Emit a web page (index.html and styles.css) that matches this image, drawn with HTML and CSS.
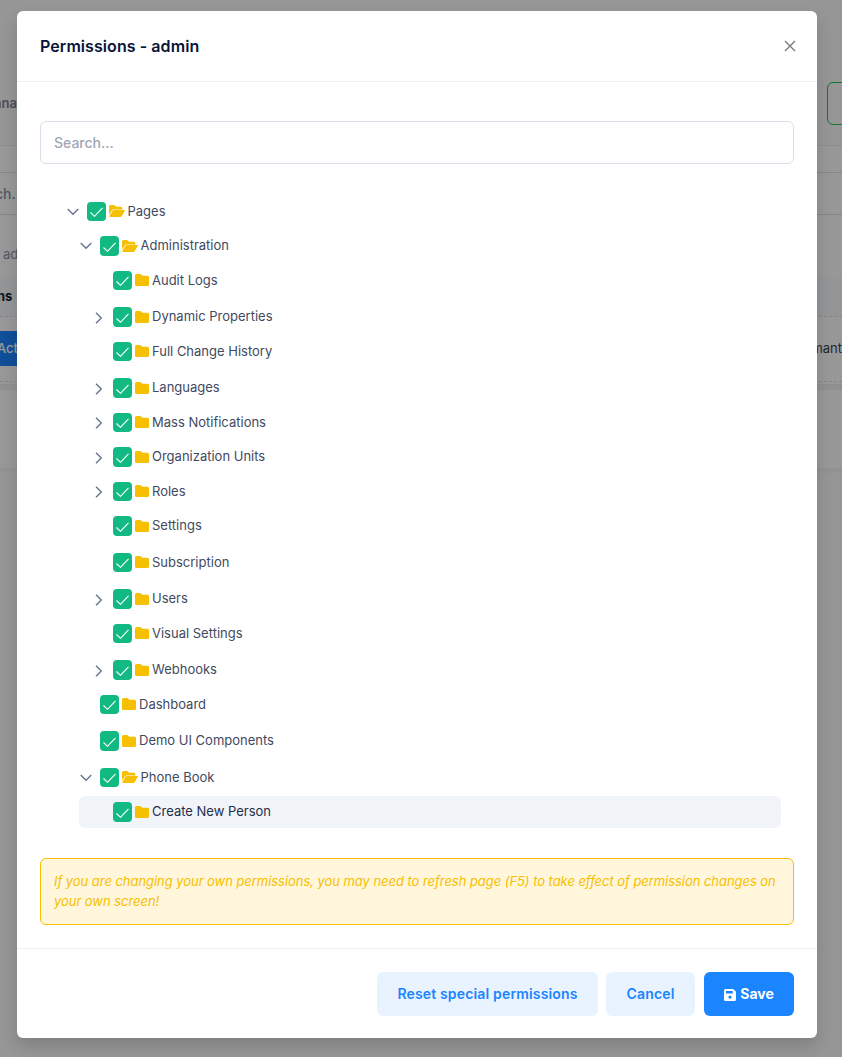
FILE: index.html
```html
<!DOCTYPE html>
<html lang="en">
<head>
<meta charset="utf-8">
<title>Permissions - admin</title>
<link rel="stylesheet" href="styles.css">
</head>
<body>
<svg class="defs" aria-hidden="true">
  <symbol id="down" viewBox="0 0 12 8"><path d="M.7 1l5.3 5.3L11.3 1" fill="none" stroke="currentColor" stroke-width="1.4"/></symbol>
  <symbol id="right" viewBox="0 0 8 12"><path d="M1 .7l5.3 5.3L1 11.3" fill="none" stroke="currentColor" stroke-width="1.4"/></symbol>
  <symbol id="check" viewBox="0 0 13 10"><path d="M.5 5.500l4 3.800L12.500.8" fill="none" stroke="currentColor" stroke-width="1.1"/></symbol>
  <symbol id="folder" viewBox="0 0 14 12"><path d="M1.500 0h3.600q.6 0 1 .4L7.400 1.700h5.100q1.500 0 1.500 1.500v7.300q0 1.500-1.500 1.500h-11Q0 12 0 10.500v-9Q0 0 1.500 0z" fill="currentColor"/></symbol>
  <symbol id="open" viewBox="0 0 16 12"><path d="M0 9.700V1.500Q0 0 1.500 0h3.300q.6 0 1 .4l1.500 1.400h4.600q1.500 0 1.500 1.500v1.100H4.600Q3.500 4.400 2.900 5.200z" fill="currentColor"/><path d="M4.700 4.900h10.500q1.100 0 .6.900l-3 5.300q-.5.900-1.500.9H.9q-1 0-.5-.9l3-5.300Q3.900 4.900 4.700 4.900z" fill="currentColor"/></symbol>
</svg>
<div class="page">
  <header class="toolbar"><span class="subtitle">ana</span><span class="outline-btn"></span></header>
  <section class="card">
    <div class="filter">ch...</div>
    <div class="note">ad</div>
    <div class="thead"><span>ns</span></div>
    <div class="trow"><span class="action">Act</span><span class="tenant">mant</span></div>
    <div class="scroller"></div>
  </section>
</div>
<div class="backdrop">
<main class="modal">
  <header class="modal-header">
    <h1>Permissions - admin</h1>
    <svg class="close" viewBox="0 0 12 12"><path d="M1 1l10 10M11 1L1 11" fill="none" stroke="currentColor" stroke-width="1.4"/></svg>
  </header>
  <div class="modal-body">
    <input class="search" type="text" placeholder="Search...">
    <div class="tree">
      <div class="row l1 h34"><svg class="down"><use href="#down"/></svg><i class="box"><svg><use href="#check"/></svg></i><svg class="open"><use href="#open"/></svg><span>Pages</span></div>
      <div class="row l2 h35 tall"><svg class="down"><use href="#down"/></svg><i class="box"><svg><use href="#check"/></svg></i><svg class="open"><use href="#open"/></svg><span>Administration</span></div>
      <div class="row l3 h36"><i class="box"><svg><use href="#check"/></svg></i><svg class="folder"><use href="#folder"/></svg><span>Audit Logs</span></div>
      <div class="row l3 h35 tall"><svg class="right"><use href="#right"/></svg><i class="box"><svg><use href="#check"/></svg></i><svg class="folder"><use href="#folder"/></svg><span>Dynamic Properties</span></div>
      <div class="row l3 h36"><i class="box"><svg><use href="#check"/></svg></i><svg class="folder"><use href="#folder"/></svg><span>Full Change History</span></div>
      <div class="row l3 h35 tall"><svg class="right"><use href="#right"/></svg><i class="box"><svg><use href="#check"/></svg></i><svg class="folder"><use href="#folder"/></svg><span>Languages</span></div>
      <div class="row l3 h34"><svg class="right"><use href="#right"/></svg><i class="box"><svg><use href="#check"/></svg></i><svg class="folder"><use href="#folder"/></svg><span>Mass Notifications</span></div>
      <div class="row l3 h35 tall"><svg class="right"><use href="#right"/></svg><i class="box"><svg><use href="#check"/></svg></i><svg class="folder"><use href="#folder"/></svg><span>Organization Units</span></div>
      <div class="row l3 h34"><svg class="right"><use href="#right"/></svg><i class="box"><svg><use href="#check"/></svg></i><svg class="folder"><use href="#folder"/></svg><span>Roles</span></div>
      <div class="row l3 h37 tall"><i class="box"><svg><use href="#check"/></svg></i><svg class="folder"><use href="#folder"/></svg><span>Settings</span></div>
      <div class="row l3 h36"><i class="box"><svg><use href="#check"/></svg></i><svg class="folder"><use href="#folder"/></svg><span>Subscription</span></div>
      <div class="row l3 h35 tall"><svg class="right"><use href="#right"/></svg><i class="box"><svg><use href="#check"/></svg></i><svg class="folder"><use href="#folder"/></svg><span>Users</span></div>
      <div class="row l3 h36"><i class="box"><svg><use href="#check"/></svg></i><svg class="folder"><use href="#folder"/></svg><span>Visual Settings</span></div>
      <div class="row l3 h35 tall"><svg class="right"><use href="#right"/></svg><i class="box"><svg><use href="#check"/></svg></i><svg class="folder"><use href="#folder"/></svg><span>Webhooks</span></div>
      <div class="row l2 h36"><i class="box"><svg><use href="#check"/></svg></i><svg class="folder"><use href="#folder"/></svg><span>Dashboard</span></div>
      <div class="row l2 h37 tall"><i class="box"><svg><use href="#check"/></svg></i><svg class="folder"><use href="#folder"/></svg><span>Demo UI Components</span></div>
      <div class="row l2 h34"><svg class="down"><use href="#down"/></svg><i class="box"><svg><use href="#check"/></svg></i><svg class="open"><use href="#open"/></svg><span>Phone Book</span></div>
      <div class="row l3 h32 tall active"><i class="box"><svg><use href="#check"/></svg></i><svg class="folder"><use href="#folder"/></svg><span>Create New Person</span></div>
    </div>
    <div class="alert">If you are changing your own permissions, you may need to refresh page (F5) to take effect of permission changes on your own screen!</div>
  </div>
  <footer class="modal-footer">
    <button class="btn reset">Reset special permissions</button>
    <button class="btn cancel">Cancel</button>
    <button class="btn save"><svg viewBox="0 0 12 12"><path fill-rule="evenodd" d="M1.500 0h7.200q.6 0 1 .4l1.900 1.900q.4.400.4 1v7.200q0 1.500-1.500 1.500h-9Q0 12 0 10.500v-9Q0 0 1.500 0zM2 2v2.600h6.800V2zM6 6.600a1.600 1.600 0 1 0 .01 0z" fill="currentColor"/></svg>Save</button>
  </footer>
</main>
</div>
</body>
</html>
```
FILE: styles.css
```css
* { box-sizing: border-box; }
body { margin: 0; height: 1057px; overflow: hidden; display: grid; font: 13px/20px Inter, sans-serif; background: #fafafa; }
.defs { position: absolute; width: 0; height: 0; }
svg { flex: none; display: block; }

.page, .backdrop { grid-area: 1 / 1; }
.page { width: 842px; height: 1057px; overflow: hidden; }
.toolbar { height: 145px; padding: 82px 0 0; display: flex; justify-content: space-between; overflow: hidden; }
.subtitle { margin: 11px 0 0 -7px; color: #7e8299; font-weight: 600; }
.subtitle { margin-left: -6px; }
.outline-btn { width: 60px; height: 43px; margin-right: -45px; border: 1px solid #17c653; border-radius: 6px; flex: none; }
.card { height: 324px; padding-top: 26px; background: #fefefe; border-top: 1px solid #eeeeee; border-bottom: 1px solid #f0f0f0; box-shadow: 0 3px 4px rgba(0,0,0,.03); overflow: hidden; }
.filter { height: 43px; padding: 11px 0; border: solid #dbdfe9; border-width: 1px 0; color: #8d91a7; font-size: 14px; font-weight: 500; text-indent: -5px; }
.note { height: 62px; padding: 29px 0 0 3px; color: #8d91a7; font-size: 13px; }
.thead { height: 40px; padding-top: 9px; background: #f5f8fa; border-bottom: 1px dashed #dbdfe9; font-weight: 700; color: #181c32; }
.thead span { display: block; margin-left: -3px; }
.trow { height: 65px; padding-top: 14px; display: flex; justify-content: space-between; border-bottom: 1px dashed #dbdfe9; }
.action { width: 100px; height: 35px; padding: 7px 0; background: #1b84ff; color: #fff; font-weight: 500; text-indent: -3px; }
.tenant { margin-top: 7px; color: #3f4254; }
.scroller { height: 6px; margin-top: 2px; background: #f1f1f1; }

.backdrop { z-index: 1; padding: 11px 25px 0 17px; background: rgba(0,0,0,.4); }
.modal { height: 1027px; background: #fff; border-radius: 6px; box-shadow: 0 8px 16px rgba(0,0,0,.15); color: #3f4a60; }
.modal-header { height: 71px; padding: 0 21px 0 23px; display: flex; align-items: center; justify-content: space-between; border-bottom: 1px solid #eff0f2; }
.modal-header h1 { margin: 0; font-size: 16px; line-height: 20px; font-weight: 600; letter-spacing: .07px; color: #071437; }
.close { width: 12px; height: 12px; color: #78797b; }
.modal-body { padding: 39px 23px 0; height: 866px; }
.search { display: block; width: 754px; height: 43px; padding: 0 13px; border: 1px solid #dbdfe9; border-radius: 6px; background: #fff; font: 500 14px Inter, sans-serif; outline: none; }
.search::placeholder { color: #a1a5b7; opacity: 1; }

.tree { margin: 32px 13px 0 26px; }
.row { display: flex; align-items: flex-start; padding-top: 6px; }
.l1 { padding-left: 21px; }
.l2 { padding-left: 34px; }
.l3 { margin-left: 13px; padding-left: 34px; }
.h32 { height: 32px; }
.h34 { height: 34px; }
.h35 { height: 35px; }
.h36 { height: 36px; }
.h37 { height: 37px; }
.box { flex: none; width: 19px; height: 19px; padding: 5px 3px; border-radius: 4px; background: #12b982; color: #fff; }
.tall .box { height: 20px; padding-top: 6px; }
.box svg { width: 13px; height: 10px; }
.down, .right { color: #66758f; }
.down { width: 12px; height: 8px; margin: 6px 8.500px 0 -20.500px; }
.right { width: 8px; height: 12px; margin: 4px 10.500px 0 -18.500px; }
.tall .right { margin-top: 5px; }
.folder, .open { color: #f6c000; margin-top: 3px; height: 12px; }
.tall .folder, .tall .open { margin-top: 4px; }
.folder { width: 14px; margin-left: 3px; margin-right: 3px; }
.open { width: 16px; margin-left: 3px; margin-right: 2.500px; }
.row span { margin-top: -1px; white-space: nowrap; }
.active { background: #f1f4f9; border-radius: 6px; color: #252f4a; }

.alert { width: 754px; height: 67px; margin-top: 30px; padding: 12px 13px; border: 1px solid #f6c000; border-radius: 6px; background: #fff6dc; color: #f6c000; font-style: italic; letter-spacing: -.05px; }
.modal-footer { height: 90px; padding: 23px 23px 0; display: flex; justify-content: flex-end; border-top: 1px solid #eff0f2; }
.btn { height: 44px; padding: 0 0 2px; display: flex; align-items: center; justify-content: center; border: 0; border-radius: 6px; background: #e9f3ff; color: #1b84ff; font: 600 14px Inter, sans-serif; letter-spacing: .16px; }
.reset { width: 221px; margin-right: 8px; }
.cancel { width: 89px; margin-right: 9px; }
.save { width: 90px; gap: 4px; background: #1b84ff; color: #fff; font-weight: 700; letter-spacing: 0; }
.save svg { width: 12px; height: 12px; margin-top: 3px; }
```
